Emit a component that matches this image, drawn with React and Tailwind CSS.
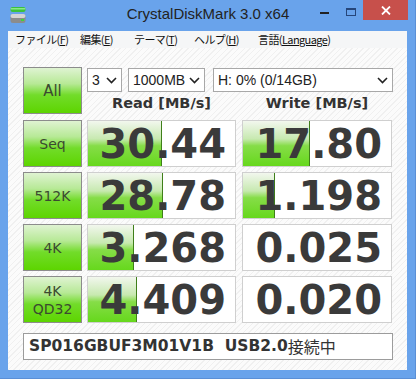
import React from 'react';

const hatch =
  'bg-[repeating-linear-gradient(135deg,#fbfbfb_0px,#fbfbfb_3px,#f0f0f0_3px,#f0f0f0_4px)]';

const Chevron = () => (
  <svg width="11" height="7" viewBox="0 0 11 7" className="shrink-0">
    <polyline points="1,1 5.5,5.5 10,1" fill="none" stroke="#222" strokeWidth="1.6" />
  </svg>
);

const Select = ({ label, className }) => (
  <div
    className={`h-[24px] bg-white border border-[#a8a8a8] flex items-center justify-between pl-[4px] pr-[4px] text-[14px] text-[#222] ${className}`}
  >
    <span className="font-['Liberation_Sans',sans-serif]">{label}</span>
    <Chevron />
  </div>
);

const TestButton = ({ children, className = '' }) => (
  <div
    className={`w-[59px] h-[47px] border border-[#8c8c8c] bg-[linear-gradient(to_bottom,#dff3d2_0%,#b7e996_35%,#72dc2a_60%,#5dd500_100%)] flex flex-col items-center justify-center leading-[18px] text-[14px] text-[#3b4a30] font-['DejaVu_Sans',sans-serif] ${className}`}
  >
    {children}
  </div>
);

const ResultCell = ({ value, fill, width }) => (
  <div
    className="relative h-[47px] border border-[#cfcfcf] bg-white flex items-center justify-end pr-[9px] overflow-hidden"
    style={{ width }}
  >
    {fill > 0 && (
      <div
        className="absolute left-0 top-0 bottom-0 border-r border-[#3f7f1a] bg-[linear-gradient(to_bottom,#f2f7ee_0%,#c7e9b0_40%,#86dd48_55%,#66d81c_100%)]"
        style={{ width: fill }}
      />
    )}
    <span className="relative font-['DejaVu_Sans',sans-serif] font-bold text-[40px] leading-none text-[#3a3a3a]">
      {value}
    </span>
  </div>
);

const rows = [
  { label: ['Seq'], read: '30.44', readFill: 74, write: '17.80', writeFill: 67 },
  { label: ['512K'], read: '28.78', readFill: 75, write: '1.198', writeFill: 32 },
  { label: ['4K'], read: '3.268', readFill: 46, write: '0.025', writeFill: 0 },
  { label: ['4K', 'QD32'], read: '4.409', readFill: 49, write: '0.020', writeFill: 0 },
];

const MenuItem = ({ text, acc, w }) => (
  <div className={`${w} shrink-0 whitespace-nowrap`}>
    {text}(<span className="underline">{acc}</span>)
  </div>
);

export default function App() {
  return (
    <div className="w-[416px] h-[379px] bg-[#69a3eb] flex flex-col border-r border-b border-[#5a8fd6]">
      {/* title bar */}
      <div className="relative h-[31px] flex items-center justify-center">
        <svg width="16" height="17" viewBox="0 0 16 17" className="absolute left-[10px] top-[7px]">
          <rect x="0.5" y="0" width="15" height="5" rx="2" fill="#3cc23c" />
          <rect x="0.5" y="1" width="15" height="1.5" rx="0.7" fill="#8ae88a" />
          <rect x="0.5" y="7" width="15" height="9" rx="2.5" fill="#8c8c8c" />
          <rect x="0.5" y="7" width="15" height="4" rx="2" fill="#d4d4d4" />
          <rect x="11" y="12" width="3" height="2" fill="#3cd63c" />
        </svg>
        <span className="font-['Liberation_Sans',sans-serif] text-[15px] text-[#222] ml-[1px] mt-[-2px]">
          CrystalDiskMark 3.0 x64
        </span>
        <div className="absolute left-[320px] top-[12px] w-[9px] h-[2px] bg-[#222]" />
        <div className="absolute left-[346px] top-[8px] w-[10px] h-[8px] border border-[#26467a] border-t-2" />
        <div className="absolute left-[363px] top-0 w-[45px] h-[20px] bg-[#c7504b] flex items-center justify-center">
          <svg width="10" height="9" viewBox="0 0 10 9">
            <path d="M1 0.5 L9 8.5 M9 0.5 L1 8.5" stroke="#fff" strokeWidth="1.8" />
          </svg>
        </div>
      </div>

      {/* menu bar */}
      <div className="mx-[8px] h-[17px] bg-[#f5f6f7] flex items-center pl-[7px] text-[11px] text-[#111] font-['Noto_Sans_CJK_JP',sans-serif] tracking-[-0.6px] leading-none">
        <MenuItem text="ファイル" acc="F" w="w-[65px]" />
        <MenuItem text="編集" acc="E" w="w-[54px]" />
        <MenuItem text="テーマ" acc="T" w="w-[60px]" />
        <MenuItem text="ヘルプ" acc="H" w="w-[64px]" />
        <MenuItem text="言語" acc="Language" w="w-[100px]" />
      </div>

      {/* client area */}
      <div className={`mx-[8px] h-[322px] ${hatch} pl-[15px] pt-[19px] flex flex-col`}>
        <div className="flex">
          <TestButton className="text-[15px]">All</TestButton>
          <div className="ml-[5px] flex flex-col">
            <div className="flex mt-[1px]">
              <Select label="3" className="w-[35px]" />
              <Select label="1000MB" className="w-[77px] ml-[6px]" />
              <Select label="H: 0% (0/14GB)" className="w-[180px] ml-[8px]" />
            </div>
            <div className="flex h-[23px] items-center font-['DejaVu_Sans',sans-serif] font-bold text-[14.5px] text-[#333]">
              <div className="w-[149px] text-center">Read [MB/s]</div>
              <div className="w-[150px] ml-[6px] text-center">Write [MB/s]</div>
            </div>
          </div>
        </div>

        {rows.map((r, i) => (
          <div key={i} className="flex mt-[5px]">
            <TestButton>
              {r.label.map((l) => (
                <span key={l}>{l}</span>
              ))}
            </TestButton>
            <div className="ml-[5px]">
              <ResultCell value={r.read} fill={r.readFill} width={149} />
            </div>
            <div className="ml-[6px]">
              <ResultCell value={r.write} fill={r.writeFill} width={150} />
            </div>
          </div>
        ))}

        <div className="mt-[10px] w-[370px] h-[27px] bg-white border border-[#9c9c9c] flex items-center pl-[5px] text-[15.5px] leading-none text-[#333] font-['DejaVu_Sans',sans-serif] font-bold whitespace-pre">
          <span>SP016GBUF3M01V1B  USB2.0</span>
          <span className="font-normal font-['Noto_Sans_CJK_JP',sans-serif] text-[16px] mt-[-2px]">接続中</span>
        </div>
      </div>
    </div>
  );
}
